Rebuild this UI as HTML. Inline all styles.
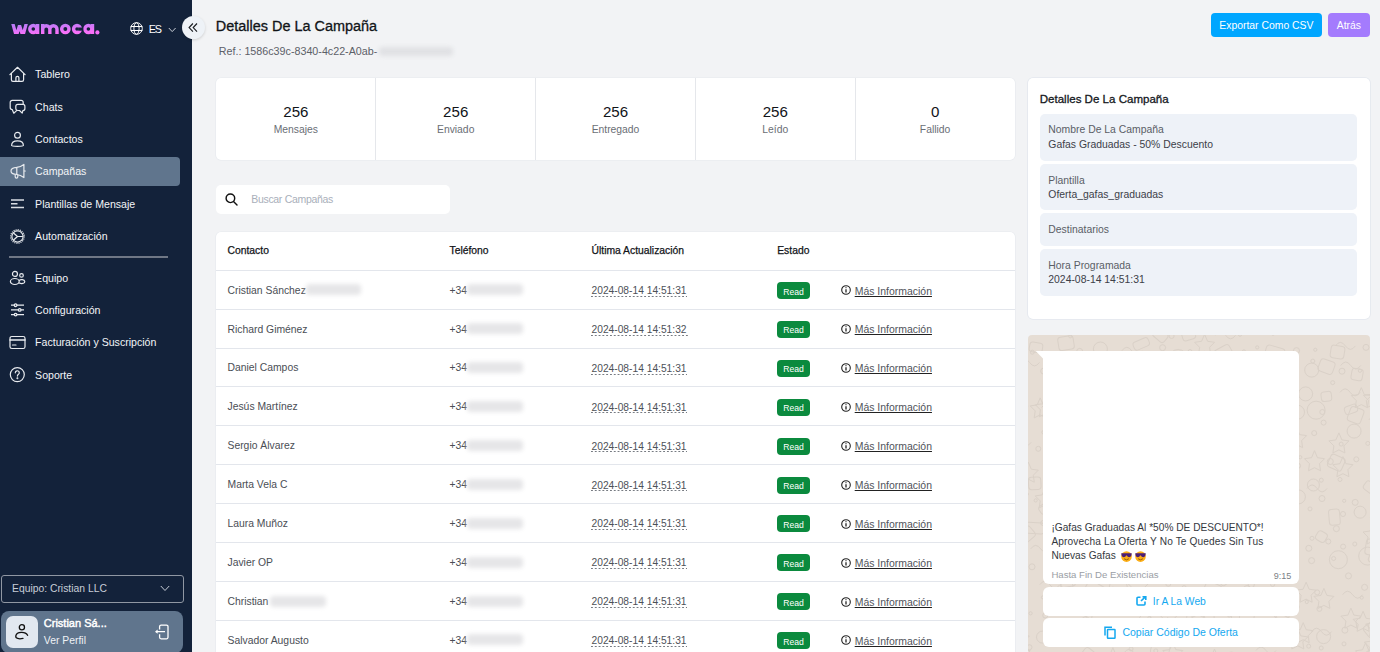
<!DOCTYPE html>
<html><head><meta charset="utf-8"><title>Detalles De La Campaña</title>
<style>
html,body{margin:0;padding:0;}
body{width:1380px;height:652px;overflow:hidden;position:relative;background:#f2f3f5;font-family:"Liberation Sans",sans-serif;}
.a{position:absolute;box-sizing:border-box;}
.t{position:absolute;white-space:nowrap;}
svg{position:absolute;overflow:visible;}
.blur{position:absolute;background:#dcdcdc;border-radius:4px;filter:blur(2px);}
</style></head><body>
<div class="a" style="left:0px;top:0px;width:192px;height:652px;background:#13223a;"></div>
<svg style="left:0;top:0" width="110" height="45" viewBox="0 0 110 45"><defs><linearGradient id="lg" gradientUnits="userSpaceOnUse" x1="10" y1="23.5" x2="10.5" y2="35"><stop offset="0" stop-color="#b07df7"/><stop offset="1" stop-color="#f870f8"/></linearGradient></defs><clipPath id="lc"><rect x="0" y="24" width="110" height="10"/></clipPath><g fill="none" stroke="url(#lg)" stroke-width="3.4"><path clip-path="url(#lc)" d="M12.4 22 L16.3 36 L19.55 25.5 L22.8 36 L26.7 22" stroke-linejoin="bevel" stroke-width="3.3"/><circle cx="33.3" cy="29" r="3.5"/><path d="M37.6 24 V34"/><path d="M42.7 24 V34 M42.7 34 V29.3 A3.575 3.575 0 0 1 49.85 29.3 V34 M49.85 29.3 A3.575 3.575 0 0 1 57 29.3 V34"/><circle cx="65.35" cy="29" r="3.65"/><circle cx="77" cy="29" r="3.45"/><circle cx="88.4" cy="29" r="3.5"/><path d="M92.5 24 V34"/></g><rect x="78.2" y="27.5" width="5" height="3.2" fill="#13223a"/><circle cx="97.4" cy="32.4" r="2.1" fill="#f56ef8"/></svg>
<svg style="left:130px;top:22px" width="13" height="13" viewBox="0 0 13 13" fill="none" stroke="#fff" stroke-width="1"><circle cx="6.5" cy="6.5" r="5.8"/><ellipse cx="6.5" cy="6.5" rx="2.6" ry="5.8"/><line x1="0.7" y1="4.5" x2="12.3" y2="4.5"/><line x1="0.7" y1="8.5" x2="12.3" y2="8.5"/></svg>
<div class="t" style="left:148.80px;top:22.61px;font-size:10.8px;line-height:13.5px;color:#fff;letter-spacing:-1.3px;">ES</div>
<svg style="left:168px;top:26.5px" width="9" height="6" viewBox="0 0 9 6" fill="none" stroke="#c9ced6" stroke-width="1"><path d="M0.8 1 L4.2 4.6 L7.6 1"/></svg>
<div class="a" style="left:182px;top:16px;width:23px;height:23px;background:#eef2f7;border-radius:50%;box-shadow:0 1px 3px rgba(0,0,0,0.15);"></div>
<svg style="left:188px;top:23px" width="11" height="10" viewBox="0 0 11 10" fill="none" stroke="#1a1d22" stroke-width="1.15"><path d="M4.9 0.5 L1.1 4.6 L4.9 8.7 M9 0.5 L5.2 4.6 L9 8.7"/></svg>
<div class="a" style="left:0px;top:157px;width:180px;height:29px;background:#60758d;border-radius:0 4px 4px 0;"></div>
<div class="t" style="left:35.10px;top:68.10px;font-size:10.6px;line-height:13.25px;color:#f3f5f8;">Tablero</div>
<div class="t" style="left:35.10px;top:100.50px;font-size:10.6px;line-height:13.25px;color:#f3f5f8;">Chats</div>
<div class="t" style="left:35.10px;top:132.90px;font-size:10.6px;line-height:13.25px;color:#f3f5f8;">Contactos</div>
<div class="t" style="left:35.10px;top:165.30px;font-size:10.6px;line-height:13.25px;color:#f3f5f8;">Campañas</div>
<div class="t" style="left:35.10px;top:197.70px;font-size:10.6px;line-height:13.25px;color:#f3f5f8;">Plantillas de Mensaje</div>
<div class="t" style="left:35.10px;top:230.10px;font-size:10.6px;line-height:13.25px;color:#f3f5f8;">Automatización</div>
<div class="t" style="left:35.10px;top:271.70px;font-size:10.6px;line-height:13.25px;color:#f3f5f8;">Equipo</div>
<div class="t" style="left:35.10px;top:304.00px;font-size:10.6px;line-height:13.25px;color:#f3f5f8;">Configuración</div>
<div class="t" style="left:35.10px;top:336.20px;font-size:10.6px;line-height:13.25px;color:#f3f5f8;">Facturación y Suscripción</div>
<div class="t" style="left:35.10px;top:368.50px;font-size:10.6px;line-height:13.25px;color:#f3f5f8;">Soporte</div>
<div class="a" style="left:8.5px;top:256px;width:159.5px;height:2px;background:#6f7785;"></div>
<svg style="left:9px;top:66px" width="17" height="17" viewBox="0 0 17 17" fill="none" stroke="#e8ebef" stroke-width="1.2" stroke-linecap="round" stroke-linejoin="round"><path d="M0.9 8.6 L8.5 1.3 L16.1 8.6 M2.4 7.3 V13.8 a1.6 1.6 0 0 0 1.6 1.6 H13 a1.6 1.6 0 0 0 1.6 -1.6 V7.3 M6.9 15.4 V11.8 a1.5 1.5 0 0 1 3 0 V15.4"/></svg>
<svg style="left:9px;top:99px" width="17" height="16" viewBox="0 0 17 16" fill="none" stroke="#e8ebef" stroke-width="1.2" stroke-linecap="round" stroke-linejoin="round"><path d="M14.2 5.3 V3.4 a2 2 0 0 0 -2 -2 H3.2 a2 2 0 0 0 -2 2 V8.5 a2 2 0 0 0 2 2 L4.8 14.2 L7.6 11.6"/><path d="M8.8 5.4 H13.9 a2 2 0 0 1 2 2 V9.5 a2 2 0 0 1 -2 2 L13.2 14.2 L10.5 11.5 H8.8 a2 2 0 0 1 -2 -2 V7.4 a2 2 0 0 1 2 -2 Z"/></svg>
<svg style="left:9px;top:131px" width="17" height="17" viewBox="0 0 17 17" fill="none" stroke="#e8ebef" stroke-width="1.2" stroke-linecap="round" stroke-linejoin="round"><circle cx="8.5" cy="4.2" r="2.9"/><path d="M2.6 14.6 C2.6 11.3, 5.3 9.8, 8.5 9.8 C11.7 9.8, 14.4 11.3, 14.4 14.6 C14.4 15.6, 2.6 15.6, 2.6 14.6 Z"/></svg>
<svg style="left:9.6px;top:163px" width="17" height="17" viewBox="0 0 17 17" fill="none" stroke="#e8ebef" stroke-width="1.2" stroke-linecap="round" stroke-linejoin="round"><path d="M6.8 4.3 C3 4.5, 1 6, 1 8 C1 10, 3 11.3, 6.8 11.5 Z M6.8 4.3 Q10.5 3.9 13.9 1.4 V14.6 Q10.5 12 6.8 11.5 M13.9 8 H15.3 M5.2 11.6 V13.8 a1.3 1.3 0 0 0 2.6 0 V11.6"/></svg>
<svg style="left:10px;top:199px" width="15" height="10" viewBox="0 0 15 10" fill="none" stroke="#d9dde3" stroke-width="1.6"><path d="M1 1 H14 M1 4.8 H7.5 M1 8.5 H14"/></svg>
<svg style="left:9px;top:227.6px" width="17" height="17" viewBox="0 0 17 17" fill="none" stroke="#e8ebef" stroke-width="1.2" stroke-linecap="round" stroke-linejoin="round"><circle cx="8.5" cy="8.5" r="6.75" stroke-dasharray="1.06 1.06" stroke-width="1.3" stroke-linecap="butt"/><circle cx="8.5" cy="8.5" r="5.6" stroke-width="1.1"/><path d="M8.5 8.5 L4.8 5.2 M8.5 8.5 L4.8 11.8 M8.5 8.5 H13.5"/></svg>
<svg style="left:9px;top:269px" width="18" height="16" viewBox="0 0 18 16" fill="none" stroke="#e8ebef" stroke-width="1.2" stroke-linecap="round" stroke-linejoin="round"><circle cx="5.95" cy="4.9" r="2.5"/><circle cx="12.5" cy="6.4" r="1.8"/><ellipse cx="5.8" cy="12.5" rx="4.4" ry="3"/><path d="M10.2 11.4 C11.5 10, 15.5 10.3, 15.8 12.6 C16 14.6, 12.5 15, 10.2 14"/></svg>
<svg style="left:10px;top:303px" width="15" height="14" viewBox="0 0 15 14" fill="none" stroke="#e8ebef" stroke-width="1.3"><path d="M1 2.2 H14 M1 6.9 H14 M1 11.6 H14"/><circle cx="5.6" cy="2.2" r="1.3" fill="#13223a"/><circle cx="9.7" cy="6.9" r="1.3" fill="#13223a"/><circle cx="5.6" cy="11.6" r="1.3" fill="#13223a"/></svg>
<svg style="left:9px;top:335px" width="17" height="15" viewBox="0 0 17 15" fill="none" stroke="#e8ebef" stroke-width="1.2" stroke-linecap="round" stroke-linejoin="round"><rect x="1" y="1.5" width="15" height="12" rx="1.8"/><path d="M1 5 H16" stroke-width="1.6"/><path d="M3.5 10 H7"/></svg>
<svg style="left:9px;top:366px" width="17" height="17" viewBox="0 0 17 17" fill="none" stroke="#e8ebef" stroke-width="1.2" stroke-linecap="round" stroke-linejoin="round"><circle cx="8.3" cy="8.6" r="7"/><path d="M6.3 6.8 a2 2 0 1 1 3 1.7 c-0.7 0.4 -0.9 0.8 -0.9 1.6"/><circle cx="8.4" cy="12.2" r="0.4" fill="#e8ebef"/></svg>
<div class="a" style="left:0.5px;top:574.5px;width:183px;height:28.5px;border:1px solid #9097a3;border-radius:3px;"></div>
<div class="t" style="left:12.00px;top:582.74px;font-size:10.35px;line-height:12.94px;color:#c8ced8;">Equipo: Cristian LLC</div>
<svg style="left:160px;top:585px" width="10" height="7" viewBox="0 0 10 7" fill="none" stroke="#c8ced8" stroke-width="1"><path d="M0.8 1 L5 5.5 L9.2 1"/></svg>
<div class="a" style="left:0.5px;top:611px;width:182.5px;height:41.5px;background:#60758d;border-radius:8px;"></div>
<div class="a" style="left:6px;top:616px;width:32px;height:32px;background:#e2e8f0;border-radius:7px;"></div>
<svg style="left:14px;top:623px" width="16" height="18" viewBox="0 0 16 18" fill="none" stroke="#111" stroke-width="1.3" stroke-linecap="round"><circle cx="7.9" cy="4.2" r="2.6"/><path d="M13.6 12.3 C11.5 8.2, 2.8 8.4, 1.8 12.8 C1.4 15.6, 5 16.3, 9 15.4"/></svg>
<div class="t" style="left:43.80px;top:616.91px;font-size:11.0px;line-height:13.75px;color:#fff;-webkit-text-stroke:0.45px #fff;">Cristian Sá...</div>
<div class="t" style="left:43.80px;top:633.60px;font-size:10.4px;line-height:13.0px;color:#eef1f5;">Ver Perfil</div>
<svg style="left:154px;top:624px" width="16" height="16" viewBox="0 0 16 16" fill="none" stroke="#fff" stroke-width="1.3" stroke-linejoin="round"><path d="M5.6 5.6 V2.6 a1.5 1.5 0 0 1 1.5 -1.5 H12.5 a1.5 1.5 0 0 1 1.5 1.5 V13.3 a1.5 1.5 0 0 1 -1.5 1.5 H7.1 a1.5 1.5 0 0 1 -1.5 -1.5 V10.2 M11 7.7 H3"/><path d="M1 7.7 L3.6 5.6 V9.8 Z" fill="#fff" stroke="none"/></svg>
<div class="t" style="left:215.80px;top:17.46px;font-size:14.45px;line-height:18.06px;color:#111418;-webkit-text-stroke:0.3px #111418;">Detalles De La Campaña</div>
<div class="t" style="left:218.80px;top:44.59px;font-size:10.72px;line-height:13.4px;color:#5c6068;">Ref.: 1586c39c-8340-4c22-A0ab-</div>
<div class="blur" style="left:379px;top:46.5px;width:74px;height:9px;background:#e0e1e4;"></div>
<div class="a" style="left:1211px;top:13px;width:111px;height:24px;background:#00a6ff;border-radius:4px;"></div>
<div class="t" style="left:1219.30px;top:19.00px;font-size:10.4px;line-height:13.0px;color:#fff;">Exportar Como CSV</div>
<div class="a" style="left:1328px;top:13px;width:42px;height:24px;background:#a47bfd;border-radius:4px;"></div>
<div class="t" style="left:1336.80px;top:19.00px;font-size:10.4px;line-height:13.0px;color:#fff;">Atrás</div>
<div class="a" style="left:216px;top:78px;width:799px;height:82px;background:#fff;border-radius:5px;box-shadow:0 0 0 0.6px #e6e9ee;"></div>
<div class="t" style="left:216.00px;width:159.8px;text-align:center;top:102.87px;font-size:15.1px;line-height:18.8px;color:#111419;">256</div>
<div class="t" style="left:216.00px;width:159.8px;text-align:center;top:123.41px;font-size:10.35px;line-height:13px;color:#6a6e75;">Mensajes</div>
<div class="a" style="left:375.3px;top:78px;width:1px;height:82px;background:#e5e7eb;"></div>
<div class="t" style="left:375.80px;width:159.8px;text-align:center;top:102.87px;font-size:15.1px;line-height:18.8px;color:#111419;">256</div>
<div class="t" style="left:375.80px;width:159.8px;text-align:center;top:123.41px;font-size:10.35px;line-height:13px;color:#6a6e75;">Enviado</div>
<div class="a" style="left:535.1px;top:78px;width:1px;height:82px;background:#e5e7eb;"></div>
<div class="t" style="left:535.60px;width:159.8px;text-align:center;top:102.87px;font-size:15.1px;line-height:18.8px;color:#111419;">256</div>
<div class="t" style="left:535.60px;width:159.8px;text-align:center;top:123.41px;font-size:10.35px;line-height:13px;color:#6a6e75;">Entregado</div>
<div class="a" style="left:694.9px;top:78px;width:1px;height:82px;background:#e5e7eb;"></div>
<div class="t" style="left:695.40px;width:159.8px;text-align:center;top:102.87px;font-size:15.1px;line-height:18.8px;color:#111419;">256</div>
<div class="t" style="left:695.40px;width:159.8px;text-align:center;top:123.41px;font-size:10.35px;line-height:13px;color:#6a6e75;">Leído</div>
<div class="a" style="left:854.7px;top:78px;width:1px;height:82px;background:#e5e7eb;"></div>
<div class="t" style="left:855.20px;width:159.8px;text-align:center;top:102.87px;font-size:15.1px;line-height:18.8px;color:#111419;">0</div>
<div class="t" style="left:855.20px;width:159.8px;text-align:center;top:123.41px;font-size:10.35px;line-height:13px;color:#6a6e75;">Fallido</div>
<div class="a" style="left:216px;top:185px;width:234px;height:29px;background:#fff;border-radius:5px;"></div>
<svg style="left:225px;top:193px" width="14" height="14" viewBox="0 0 14 14" fill="none" stroke="#111" stroke-width="1.45" stroke-linecap="round"><circle cx="5.4" cy="5.3" r="4.3"/><path d="M8.5 8.5 L12 12"/></svg>
<div class="t" style="left:251.20px;top:192.90px;font-size:10.5px;line-height:13.12px;color:#a9afba;letter-spacing:-0.3px;">Buscar Campañas</div>
<div class="a" style="left:216px;top:232px;width:799px;height:430px;background:#fff;border-radius:5px;box-shadow:0 0 0 0.6px #e6e9ee;"></div>
<div class="t" style="left:227.50px;top:244.64px;font-size:10.35px;line-height:12.94px;color:#111418;-webkit-text-stroke:0.25px #111418;">Contacto</div>
<div class="t" style="left:449.50px;top:244.64px;font-size:10.35px;line-height:12.94px;color:#111418;-webkit-text-stroke:0.25px #111418;">Teléfono</div>
<div class="t" style="left:591.50px;top:244.64px;font-size:10.35px;line-height:12.94px;color:#111418;-webkit-text-stroke:0.25px #111418;">Última Actualización</div>
<div class="t" style="left:777.20px;top:244.64px;font-size:10.35px;line-height:12.94px;color:#111418;-webkit-text-stroke:0.25px #111418;">Estado</div>
<div class="a" style="left:216px;top:270px;width:799px;height:1px;background:#e3e6ec;"></div>
<div class="t" style="left:227.50px;top:284.64px;font-size:10.36px;line-height:12.95px;color:#4a4e55;">Cristian Sánchez</div>
<div class="blur" style="left:306px;top:284.30px;width:55px;height:11px;background:#e6e6e8;"></div>
<div class="t" style="left:449.50px;top:284.64px;font-size:10.36px;line-height:12.95px;color:#4a4e55;">+34</div>
<div class="blur" style="left:467px;top:284.30px;width:56px;height:11px;background:#e6e6e8;"></div>
<div class="t" style="left:591.50px;top:285.05px;font-size:10.24px;line-height:12.8px;color:#4d5158;">2024-08-14 14:51:31</div>
<div class="a" style="left:591px;top:296px;width:96px;height:1.2px;background:linear-gradient(to right,#777b82 55%,transparent 55%);background-size:3.8px 1.2px;"></div>
<div class="a" style="left:777px;top:282.0px;width:33px;height:17px;background:#0b8a3e;border-radius:4px;"></div>
<div class="t" style="left:783.20px;top:286.55px;font-size:8.6px;line-height:10.75px;color:#fff;font-weight:500;">Read</div>
<svg style="left:841px;top:285.30px" width="10" height="10" viewBox="0 0 10 10" fill="none" stroke="#222" stroke-width="1.1"><circle cx="5" cy="5" r="4.3"/><path d="M5 4.3 V7.6" stroke-width="1.3"/><circle cx="5" cy="2.7" r="0.6" fill="#222" stroke="none"/></svg>
<div class="t" style="left:854.70px;top:284.54px;font-size:10.46px;line-height:13.08px;color:#50545b;text-decoration:underline;text-decoration-color:#222;">Más Información</div>
<div class="a" style="left:216px;top:309px;width:799px;height:1px;background:#e3e6ec;"></div>
<div class="t" style="left:227.50px;top:323.54px;font-size:10.36px;line-height:12.95px;color:#4a4e55;">Richard Giménez</div>
<div class="t" style="left:449.50px;top:323.54px;font-size:10.36px;line-height:12.95px;color:#4a4e55;">+34</div>
<div class="blur" style="left:467px;top:323.20px;width:56px;height:11px;background:#e6e6e8;"></div>
<div class="t" style="left:591.50px;top:323.95px;font-size:10.24px;line-height:12.8px;color:#4d5158;">2024-08-14 14:51:32</div>
<div class="a" style="left:591px;top:335px;width:97px;height:1.2px;background:linear-gradient(to right,#777b82 55%,transparent 55%);background-size:3.8px 1.2px;"></div>
<div class="a" style="left:777px;top:320.9px;width:33px;height:17px;background:#0b8a3e;border-radius:4px;"></div>
<div class="t" style="left:783.20px;top:325.45px;font-size:8.6px;line-height:10.75px;color:#fff;font-weight:500;">Read</div>
<svg style="left:841px;top:324.20px" width="10" height="10" viewBox="0 0 10 10" fill="none" stroke="#222" stroke-width="1.1"><circle cx="5" cy="5" r="4.3"/><path d="M5 4.3 V7.6" stroke-width="1.3"/><circle cx="5" cy="2.7" r="0.6" fill="#222" stroke="none"/></svg>
<div class="t" style="left:854.70px;top:323.44px;font-size:10.46px;line-height:13.08px;color:#50545b;text-decoration:underline;text-decoration-color:#222;">Más Información</div>
<div class="a" style="left:216px;top:348px;width:799px;height:1px;background:#e3e6ec;"></div>
<div class="t" style="left:227.50px;top:362.44px;font-size:10.36px;line-height:12.95px;color:#4a4e55;">Daniel Campos</div>
<div class="t" style="left:449.50px;top:362.44px;font-size:10.36px;line-height:12.95px;color:#4a4e55;">+34</div>
<div class="blur" style="left:467px;top:362.10px;width:56px;height:11px;background:#e6e6e8;"></div>
<div class="t" style="left:591.50px;top:362.85px;font-size:10.24px;line-height:12.8px;color:#4d5158;">2024-08-14 14:51:31</div>
<div class="a" style="left:591px;top:374px;width:96px;height:1.2px;background:linear-gradient(to right,#777b82 55%,transparent 55%);background-size:3.8px 1.2px;"></div>
<div class="a" style="left:777px;top:359.8px;width:33px;height:17px;background:#0b8a3e;border-radius:4px;"></div>
<div class="t" style="left:783.20px;top:364.35px;font-size:8.6px;line-height:10.75px;color:#fff;font-weight:500;">Read</div>
<svg style="left:841px;top:363.10px" width="10" height="10" viewBox="0 0 10 10" fill="none" stroke="#222" stroke-width="1.1"><circle cx="5" cy="5" r="4.3"/><path d="M5 4.3 V7.6" stroke-width="1.3"/><circle cx="5" cy="2.7" r="0.6" fill="#222" stroke="none"/></svg>
<div class="t" style="left:854.70px;top:362.34px;font-size:10.46px;line-height:13.08px;color:#50545b;text-decoration:underline;text-decoration-color:#222;">Más Información</div>
<div class="a" style="left:216px;top:386px;width:799px;height:1px;background:#e3e6ec;"></div>
<div class="t" style="left:227.50px;top:401.34px;font-size:10.36px;line-height:12.95px;color:#4a4e55;">Jesús Martínez</div>
<div class="t" style="left:449.50px;top:401.34px;font-size:10.36px;line-height:12.95px;color:#4a4e55;">+34</div>
<div class="blur" style="left:467px;top:401.00px;width:56px;height:11px;background:#e6e6e8;"></div>
<div class="t" style="left:591.50px;top:401.75px;font-size:10.24px;line-height:12.8px;color:#4d5158;">2024-08-14 14:51:31</div>
<div class="a" style="left:591px;top:412px;width:96px;height:1.2px;background:linear-gradient(to right,#777b82 55%,transparent 55%);background-size:3.8px 1.2px;"></div>
<div class="a" style="left:777px;top:398.7px;width:33px;height:17px;background:#0b8a3e;border-radius:4px;"></div>
<div class="t" style="left:783.20px;top:403.25px;font-size:8.6px;line-height:10.75px;color:#fff;font-weight:500;">Read</div>
<svg style="left:841px;top:402.00px" width="10" height="10" viewBox="0 0 10 10" fill="none" stroke="#222" stroke-width="1.1"><circle cx="5" cy="5" r="4.3"/><path d="M5 4.3 V7.6" stroke-width="1.3"/><circle cx="5" cy="2.7" r="0.6" fill="#222" stroke="none"/></svg>
<div class="t" style="left:854.70px;top:401.24px;font-size:10.46px;line-height:13.08px;color:#50545b;text-decoration:underline;text-decoration-color:#222;">Más Información</div>
<div class="a" style="left:216px;top:425px;width:799px;height:1px;background:#e3e6ec;"></div>
<div class="t" style="left:227.50px;top:440.24px;font-size:10.36px;line-height:12.95px;color:#4a4e55;">Sergio Álvarez</div>
<div class="t" style="left:449.50px;top:440.24px;font-size:10.36px;line-height:12.95px;color:#4a4e55;">+34</div>
<div class="blur" style="left:467px;top:439.90px;width:56px;height:11px;background:#e6e6e8;"></div>
<div class="t" style="left:591.50px;top:440.65px;font-size:10.24px;line-height:12.8px;color:#4d5158;">2024-08-14 14:51:31</div>
<div class="a" style="left:591px;top:451px;width:96px;height:1.2px;background:linear-gradient(to right,#777b82 55%,transparent 55%);background-size:3.8px 1.2px;"></div>
<div class="a" style="left:777px;top:437.6px;width:33px;height:17px;background:#0b8a3e;border-radius:4px;"></div>
<div class="t" style="left:783.20px;top:442.15px;font-size:8.6px;line-height:10.75px;color:#fff;font-weight:500;">Read</div>
<svg style="left:841px;top:440.90px" width="10" height="10" viewBox="0 0 10 10" fill="none" stroke="#222" stroke-width="1.1"><circle cx="5" cy="5" r="4.3"/><path d="M5 4.3 V7.6" stroke-width="1.3"/><circle cx="5" cy="2.7" r="0.6" fill="#222" stroke="none"/></svg>
<div class="t" style="left:854.70px;top:440.14px;font-size:10.46px;line-height:13.08px;color:#50545b;text-decoration:underline;text-decoration-color:#222;">Más Información</div>
<div class="a" style="left:216px;top:464px;width:799px;height:1px;background:#e3e6ec;"></div>
<div class="t" style="left:227.50px;top:479.14px;font-size:10.36px;line-height:12.95px;color:#4a4e55;">Marta Vela C</div>
<div class="t" style="left:449.50px;top:479.14px;font-size:10.36px;line-height:12.95px;color:#4a4e55;">+34</div>
<div class="blur" style="left:467px;top:478.80px;width:56px;height:11px;background:#e6e6e8;"></div>
<div class="t" style="left:591.50px;top:479.55px;font-size:10.24px;line-height:12.8px;color:#4d5158;">2024-08-14 14:51:31</div>
<div class="a" style="left:591px;top:490px;width:96px;height:1.2px;background:linear-gradient(to right,#777b82 55%,transparent 55%);background-size:3.8px 1.2px;"></div>
<div class="a" style="left:777px;top:476.5px;width:33px;height:17px;background:#0b8a3e;border-radius:4px;"></div>
<div class="t" style="left:783.20px;top:481.05px;font-size:8.6px;line-height:10.75px;color:#fff;font-weight:500;">Read</div>
<svg style="left:841px;top:479.80px" width="10" height="10" viewBox="0 0 10 10" fill="none" stroke="#222" stroke-width="1.1"><circle cx="5" cy="5" r="4.3"/><path d="M5 4.3 V7.6" stroke-width="1.3"/><circle cx="5" cy="2.7" r="0.6" fill="#222" stroke="none"/></svg>
<div class="t" style="left:854.70px;top:479.04px;font-size:10.46px;line-height:13.08px;color:#50545b;text-decoration:underline;text-decoration-color:#222;">Más Información</div>
<div class="a" style="left:216px;top:503px;width:799px;height:1px;background:#e3e6ec;"></div>
<div class="t" style="left:227.50px;top:518.04px;font-size:10.36px;line-height:12.95px;color:#4a4e55;">Laura Muñoz</div>
<div class="t" style="left:449.50px;top:518.04px;font-size:10.36px;line-height:12.95px;color:#4a4e55;">+34</div>
<div class="blur" style="left:467px;top:517.70px;width:56px;height:11px;background:#e6e6e8;"></div>
<div class="t" style="left:591.50px;top:518.45px;font-size:10.24px;line-height:12.8px;color:#4d5158;">2024-08-14 14:51:31</div>
<div class="a" style="left:591px;top:529px;width:96px;height:1.2px;background:linear-gradient(to right,#777b82 55%,transparent 55%);background-size:3.8px 1.2px;"></div>
<div class="a" style="left:777px;top:515.4px;width:33px;height:17px;background:#0b8a3e;border-radius:4px;"></div>
<div class="t" style="left:783.20px;top:519.95px;font-size:8.6px;line-height:10.75px;color:#fff;font-weight:500;">Read</div>
<svg style="left:841px;top:518.70px" width="10" height="10" viewBox="0 0 10 10" fill="none" stroke="#222" stroke-width="1.1"><circle cx="5" cy="5" r="4.3"/><path d="M5 4.3 V7.6" stroke-width="1.3"/><circle cx="5" cy="2.7" r="0.6" fill="#222" stroke="none"/></svg>
<div class="t" style="left:854.70px;top:517.94px;font-size:10.46px;line-height:13.08px;color:#50545b;text-decoration:underline;text-decoration-color:#222;">Más Información</div>
<div class="a" style="left:216px;top:542px;width:799px;height:1px;background:#e3e6ec;"></div>
<div class="t" style="left:227.50px;top:556.94px;font-size:10.36px;line-height:12.95px;color:#4a4e55;">Javier OP</div>
<div class="t" style="left:449.50px;top:556.94px;font-size:10.36px;line-height:12.95px;color:#4a4e55;">+34</div>
<div class="blur" style="left:467px;top:556.60px;width:56px;height:11px;background:#e6e6e8;"></div>
<div class="t" style="left:591.50px;top:557.35px;font-size:10.24px;line-height:12.8px;color:#4d5158;">2024-08-14 14:51:31</div>
<div class="a" style="left:591px;top:568px;width:96px;height:1.2px;background:linear-gradient(to right,#777b82 55%,transparent 55%);background-size:3.8px 1.2px;"></div>
<div class="a" style="left:777px;top:554.3px;width:33px;height:17px;background:#0b8a3e;border-radius:4px;"></div>
<div class="t" style="left:783.20px;top:558.85px;font-size:8.6px;line-height:10.75px;color:#fff;font-weight:500;">Read</div>
<svg style="left:841px;top:557.60px" width="10" height="10" viewBox="0 0 10 10" fill="none" stroke="#222" stroke-width="1.1"><circle cx="5" cy="5" r="4.3"/><path d="M5 4.3 V7.6" stroke-width="1.3"/><circle cx="5" cy="2.7" r="0.6" fill="#222" stroke="none"/></svg>
<div class="t" style="left:854.70px;top:556.84px;font-size:10.46px;line-height:13.08px;color:#50545b;text-decoration:underline;text-decoration-color:#222;">Más Información</div>
<div class="a" style="left:216px;top:581px;width:799px;height:1px;background:#e3e6ec;"></div>
<div class="t" style="left:227.50px;top:595.84px;font-size:10.36px;line-height:12.95px;color:#4a4e55;">Christian</div>
<div class="blur" style="left:270px;top:595.50px;width:56px;height:11px;background:#e6e6e8;"></div>
<div class="t" style="left:449.50px;top:595.84px;font-size:10.36px;line-height:12.95px;color:#4a4e55;">+34</div>
<div class="blur" style="left:467px;top:595.50px;width:56px;height:11px;background:#e6e6e8;"></div>
<div class="t" style="left:591.50px;top:596.25px;font-size:10.24px;line-height:12.8px;color:#4d5158;">2024-08-14 14:51:31</div>
<div class="a" style="left:591px;top:607px;width:96px;height:1.2px;background:linear-gradient(to right,#777b82 55%,transparent 55%);background-size:3.8px 1.2px;"></div>
<div class="a" style="left:777px;top:593.2px;width:33px;height:17px;background:#0b8a3e;border-radius:4px;"></div>
<div class="t" style="left:783.20px;top:597.75px;font-size:8.6px;line-height:10.75px;color:#fff;font-weight:500;">Read</div>
<svg style="left:841px;top:596.50px" width="10" height="10" viewBox="0 0 10 10" fill="none" stroke="#222" stroke-width="1.1"><circle cx="5" cy="5" r="4.3"/><path d="M5 4.3 V7.6" stroke-width="1.3"/><circle cx="5" cy="2.7" r="0.6" fill="#222" stroke="none"/></svg>
<div class="t" style="left:854.70px;top:595.74px;font-size:10.46px;line-height:13.08px;color:#50545b;text-decoration:underline;text-decoration-color:#222;">Más Información</div>
<div class="a" style="left:216px;top:620px;width:799px;height:1px;background:#e3e6ec;"></div>
<div class="t" style="left:227.50px;top:634.74px;font-size:10.36px;line-height:12.95px;color:#4a4e55;">Salvador Augusto</div>
<div class="t" style="left:449.50px;top:634.74px;font-size:10.36px;line-height:12.95px;color:#4a4e55;">+34</div>
<div class="blur" style="left:467px;top:634.40px;width:56px;height:11px;background:#e6e6e8;"></div>
<div class="t" style="left:591.50px;top:635.15px;font-size:10.24px;line-height:12.8px;color:#4d5158;">2024-08-14 14:51:31</div>
<div class="a" style="left:591px;top:646px;width:96px;height:1.2px;background:linear-gradient(to right,#777b82 55%,transparent 55%);background-size:3.8px 1.2px;"></div>
<div class="a" style="left:777px;top:632.1px;width:33px;height:17px;background:#0b8a3e;border-radius:4px;"></div>
<div class="t" style="left:783.20px;top:636.65px;font-size:8.6px;line-height:10.75px;color:#fff;font-weight:500;">Read</div>
<svg style="left:841px;top:635.40px" width="10" height="10" viewBox="0 0 10 10" fill="none" stroke="#222" stroke-width="1.1"><circle cx="5" cy="5" r="4.3"/><path d="M5 4.3 V7.6" stroke-width="1.3"/><circle cx="5" cy="2.7" r="0.6" fill="#222" stroke="none"/></svg>
<div class="t" style="left:854.70px;top:634.64px;font-size:10.46px;line-height:13.08px;color:#50545b;text-decoration:underline;text-decoration-color:#222;">Más Información</div>
<div class="a" style="left:1028px;top:78px;width:341.5px;height:241px;background:#fff;border-radius:5px;box-shadow:0 0 0 0.8px #e3e7ee;"></div>
<div class="t" style="left:1039.70px;top:91.98px;font-size:11.55px;line-height:14.44px;color:#15181d;-webkit-text-stroke:0.3px #15181d;">Detalles De La Campaña</div>
<div class="a" style="left:1040px;top:113.5px;width:317px;height:47px;background:#eef2f8;border-radius:5px;"></div>
<div class="t" style="left:1048.30px;top:123.40px;font-size:10.4px;line-height:13.0px;color:#5a5e66;">Nombre De La Campaña</div>
<div class="t" style="left:1048.30px;top:137.90px;font-size:10.4px;line-height:13.0px;color:#3c4048;">Gafas Graduadas - 50% Descuento</div>
<div class="a" style="left:1040px;top:163.8px;width:317px;height:46.5px;background:#eef2f8;border-radius:5px;"></div>
<div class="t" style="left:1048.30px;top:173.70px;font-size:10.4px;line-height:13.0px;color:#5a5e66;">Plantilla</div>
<div class="t" style="left:1048.30px;top:188.20px;font-size:10.4px;line-height:13.0px;color:#3c4048;">Oferta_gafas_graduadas</div>
<div class="a" style="left:1040px;top:213.4px;width:317px;height:32.2px;background:#eef2f8;border-radius:5px;"></div>
<div class="t" style="left:1048.30px;top:223.40px;font-size:10.4px;line-height:13.0px;color:#5a5e66;">Destinatarios</div>
<div class="a" style="left:1040px;top:249px;width:317px;height:46.6px;background:#eef2f8;border-radius:5px;"></div>
<div class="t" style="left:1048.30px;top:258.90px;font-size:10.4px;line-height:13.0px;color:#5a5e66;">Hora Programada</div>
<div class="t" style="left:1048.30px;top:273.40px;font-size:10.4px;line-height:13.0px;color:#3c4048;">2024-08-14 14:51:31</div>
<div class="a" style="left:1028px;top:335px;width:341.5px;height:330px;background:#e6ddd4;border-radius:4px;overflow:hidden;"><svg style="left:0;top:0" width="342" height="330" viewBox="0 0 342 330" fill="none" stroke="#dad1c8" stroke-width="1"><path d="M-9.3 -7.5 q 5 -7 10 0 t 10 0"/><circle cx="7.9" cy="-8.4" r="6"/><circle cx="30.7" cy="-8.9" r="6"/><circle cx="35.6" cy="-11.8" r="1.6"/><circle cx="61.1" cy="-10.3" r="2"/><circle cx="78.6" cy="-2.9" r="1.6"/><circle cx="88.2" cy="-12.9" r="3"/><circle cx="107.5" cy="-7.0" r="2"/><rect x="129.9" y="-8.5" width="14.6" height="10.2" rx="3" transform="rotate(40 129.9 -8.5)"/><rect x="152.9" y="-2.7" width="13.2" height="9.8" rx="3" transform="rotate(-17 152.9 -2.7)"/><circle cx="154.2" cy="-4.0" r="2.5"/><path d="M176.6 -0.7 l3 7 l7 1 l-5 5 l1 7 l-6 -3 l-6 3 l1 -7 l-5 -5 l7 -1 z"/><path d="M187.0 -13.4 q 5 -7 10 0 t 10 0"/><circle cx="212.0" cy="-0.3" r="1.6"/><rect x="230.6" y="-13.6" width="13.4" height="10.5" rx="3" transform="rotate(-39 230.6 -13.6)"/><circle cx="245.0" cy="-1.3" r="1.6"/><circle cx="255.2" cy="-9.1" r="2"/><rect x="279.6" y="-13.8" width="11.3" height="13.1" rx="3" transform="rotate(-31 279.6 -13.8)"/><circle cx="296.2" cy="-13.4" r="2.5"/><circle cx="323.0" cy="-16.7" r="1.6"/><circle cx="323.7" cy="-14.5" r="1.6"/><circle cx="353.1" cy="-11.4" r="1.6"/><rect x="358.3" y="-13.5" width="10.2" height="10.9" rx="3" transform="rotate(10 358.3 -13.5)"/><path d="M-14.8 10.0 l3 7 l7 1 l-5 5 l1 7 l-6 -3 l-6 3 l1 -7 l-5 -5 l7 -1 z"/><rect x="2.3" y="6.6" width="13.1" height="9.8" rx="3" transform="rotate(9 2.3 6.6)"/><rect x="29.3" y="2.7" width="15.5" height="13.5" rx="3" transform="rotate(-9 29.3 2.7)"/><circle cx="42.2" cy="1.3" r="1.6"/><circle cx="51.7" cy="16.4" r="3"/><circle cx="72.4" cy="14.0" r="7"/><path d="M93.8 15.8 q 5 -7 10 0 t 10 0"/><rect x="104.1" y="8.1" width="16.2" height="8.6" rx="3" transform="rotate(-23 104.1 8.1)"/><circle cx="134.6" cy="12.7" r="3"/><circle cx="143.6" cy="1.0" r="2.5"/><circle cx="162.0" cy="16.5" r="2"/><rect x="185.1" y="16.7" width="16.9" height="12.7" rx="3" transform="rotate(-29 185.1 16.7)"/><path d="M187.6 0.3 q 5 -7 10 0 t 10 0"/><circle cx="215.9" cy="16.4" r="1.6"/><circle cx="229.2" cy="12.4" r="1.6"/><rect x="239.3" y="9.3" width="19.0" height="13.9" rx="3" transform="rotate(16 239.3 9.3)"/><circle cx="268.5" cy="15.6" r="3"/><circle cx="287.3" cy="14.8" r="1.6"/><rect x="303.7" y="9.7" width="13.8" height="12.7" rx="3" transform="rotate(9 303.7 9.7)"/><path d="M307.4 10.9 q 5 -7 10 0 t 10 0"/><circle cx="338.0" cy="12.4" r="3"/><circle cx="347.5" cy="14.3" r="1.6"/><circle cx="362.3" cy="1.5" r="1.6"/><path d="M-8.5 27.4 q 5 -7 10 0 t 10 0"/><circle cx="4.3" cy="17.2" r="2"/><circle cx="25.8" cy="29.8" r="3"/><circle cx="42.5" cy="21.1" r="2.5"/><path d="M54.4 24.3 l3 7 l7 1 l-5 5 l1 7 l-6 -3 l-6 3 l1 -7 l-5 -5 l7 -1 z"/><circle cx="83.5" cy="32.0" r="2.5"/><circle cx="88.6" cy="19.3" r="1.6"/><circle cx="114.1" cy="33.2" r="2"/><path d="M120.9 25.0 q 5 -7 10 0 t 10 0"/><circle cx="150.1" cy="23.5" r="9"/><path d="M158.4 31.3 q 5 -7 10 0 t 10 0"/><circle cx="177.7" cy="18.3" r="1.6"/><circle cx="198.5" cy="21.8" r="1.6"/><circle cx="214.9" cy="23.9" r="2.5"/><circle cx="225.0" cy="19.4" r="1.6"/><rect x="245.6" y="27.7" width="18.1" height="15.7" rx="3" transform="rotate(15 245.6 27.7)"/><circle cx="258.4" cy="25.1" r="1.6"/><circle cx="284.8" cy="26.1" r="2"/><rect x="293.6" y="22.9" width="15.2" height="12.9" rx="3" transform="rotate(20 293.6 22.9)"/><path d="M312.7 30.5 q 5 -7 10 0 t 10 0"/><rect x="324.5" y="32.9" width="11.3" height="11.6" rx="3" transform="rotate(10 324.5 32.9)"/><circle cx="355.5" cy="23.4" r="9"/><circle cx="370.5" cy="33.1" r="2"/><path d="M-15.3 48.7 l3 7 l7 1 l-5 5 l1 7 l-6 -3 l-6 3 l1 -7 l-5 -5 l7 -1 z"/><circle cx="15.7" cy="36.1" r="3"/><circle cx="33.7" cy="50.6" r="7"/><circle cx="38.5" cy="46.2" r="1.6"/><circle cx="51.6" cy="39.8" r="2.5"/><path d="M76.3 34.5 l3 7 l7 1 l-5 5 l1 7 l-6 -3 l-6 3 l1 -7 l-5 -5 l7 -1 z"/><circle cx="86.1" cy="47.6" r="2.5"/><circle cx="113.7" cy="49.6" r="3"/><path d="M135.1 42.4 q 5 -7 10 0 t 10 0"/><circle cx="137.5" cy="37.8" r="7"/><circle cx="167.1" cy="43.5" r="2.5"/><path d="M175.3 40.5 l3 7 l7 1 l-5 5 l1 7 l-6 -3 l-6 3 l1 -7 l-5 -5 l7 -1 z"/><path d="M202.3 37.5 l3 7 l7 1 l-5 5 l1 7 l-6 -3 l-6 3 l1 -7 l-5 -5 l7 -1 z"/><circle cx="220.5" cy="42.9" r="6"/><circle cx="228.0" cy="35.9" r="3"/><circle cx="238.5" cy="50.5" r="7"/><circle cx="264.2" cy="50.8" r="1.6"/><circle cx="283.7" cy="35.1" r="7"/><circle cx="304.7" cy="47.6" r="2"/><circle cx="314.0" cy="36.2" r="3"/><circle cx="331.9" cy="35.8" r="1.6"/><rect x="355.7" y="36.2" width="10.2" height="9.6" rx="3" transform="rotate(-22 355.7 36.2)"/><circle cx="368.7" cy="39.5" r="3"/><circle cx="-15.2" cy="63.4" r="2.5"/><path d="M12.2 62.9 l3 7 l7 1 l-5 5 l1 7 l-6 -3 l-6 3 l1 -7 l-5 -5 l7 -1 z"/><path d="M17.4 61.8 l3 7 l7 1 l-5 5 l1 7 l-6 -3 l-6 3 l1 -7 l-5 -5 l7 -1 z"/><path d="M44.5 60.1 l3 7 l7 1 l-5 5 l1 7 l-6 -3 l-6 3 l1 -7 l-5 -5 l7 -1 z"/><circle cx="60.1" cy="54.7" r="2"/><path d="M72.0 63.6 l3 7 l7 1 l-5 5 l1 7 l-6 -3 l-6 3 l1 -7 l-5 -5 l7 -1 z"/><circle cx="100.3" cy="56.4" r="2"/><path d="M105.7 68.0 l3 7 l7 1 l-5 5 l1 7 l-6 -3 l-6 3 l1 -7 l-5 -5 l7 -1 z"/><rect x="121.3" y="55.1" width="12.6" height="8.8" rx="3" transform="rotate(27 121.3 55.1)"/><circle cx="143.2" cy="64.4" r="3"/><circle cx="163.7" cy="64.6" r="2.5"/><circle cx="185.5" cy="67.5" r="2.5"/><circle cx="195.5" cy="62.7" r="1.6"/><rect x="212.2" y="51.4" width="16.1" height="15.2" rx="3" transform="rotate(-1 212.2 51.4)"/><circle cx="224.2" cy="53.0" r="2"/><circle cx="254.8" cy="66.8" r="1.6"/><circle cx="257.3" cy="62.6" r="1.6"/><circle cx="277.6" cy="58.9" r="7"/><rect x="292.6" y="57.3" width="10.4" height="9.6" rx="3" transform="rotate(-7 292.6 57.3)"/><path d="M312.1 57.3 q 5 -7 10 0 t 10 0"/><path d="M333.3 52.6 l3 7 l7 1 l-5 5 l1 7 l-6 -3 l-6 3 l1 -7 l-5 -5 l7 -1 z"/><path d="M345.5 52.4 l3 7 l7 1 l-5 5 l1 7 l-6 -3 l-6 3 l1 -7 l-5 -5 l7 -1 z"/><path d="M371.9 66.4 q 5 -7 10 0 t 10 0"/><circle cx="-7.3" cy="71.2" r="7"/><path d="M13.7 72.4 q 5 -7 10 0 t 10 0"/><path d="M29.7 81.2 l3 7 l7 1 l-5 5 l1 7 l-6 -3 l-6 3 l1 -7 l-5 -5 l7 -1 z"/><path d="M40.9 83.2 l3 7 l7 1 l-5 5 l1 7 l-6 -3 l-6 3 l1 -7 l-5 -5 l7 -1 z"/><rect x="62.8" y="81.0" width="14.1" height="13.8" rx="3" transform="rotate(-34 62.8 81.0)"/><circle cx="73.8" cy="76.0" r="2.5"/><circle cx="101.8" cy="83.3" r="2.5"/><circle cx="118.1" cy="79.3" r="3"/><circle cx="128.7" cy="77.1" r="3"/><rect x="146.9" y="79.9" width="19.8" height="8.2" rx="3" transform="rotate(9 146.9 79.9)"/><circle cx="165.6" cy="72.4" r="1.6"/><circle cx="182.9" cy="79.0" r="2.5"/><circle cx="191.3" cy="83.4" r="9"/><path d="M211.1 76.9 l3 7 l7 1 l-5 5 l1 7 l-6 -3 l-6 3 l1 -7 l-5 -5 l7 -1 z"/><rect x="222.7" y="75.6" width="15.5" height="13.3" rx="3" transform="rotate(36 222.7 75.6)"/><circle cx="244.6" cy="84.0" r="2"/><circle cx="269.5" cy="77.2" r="7"/><circle cx="288.1" cy="75.2" r="9"/><circle cx="294.3" cy="77.0" r="2.5"/><rect x="315.5" y="72.8" width="13.0" height="8.1" rx="3" transform="rotate(-20 315.5 72.8)"/><rect x="323.7" y="70.7" width="13.9" height="15.2" rx="3" transform="rotate(20 323.7 70.7)"/><path d="M340.9 84.8 q 5 -7 10 0 t 10 0"/><circle cx="358.2" cy="83.4" r="3"/><circle cx="-12.7" cy="97.8" r="1.6"/><circle cx="15.9" cy="97.3" r="2"/><rect x="27.3" y="87.0" width="14.6" height="9.6" rx="3" transform="rotate(-36 27.3 87.0)"/><circle cx="43.0" cy="87.1" r="3"/><circle cx="58.7" cy="89.5" r="7"/><path d="M74.2 97.6 l3 7 l7 1 l-5 5 l1 7 l-6 -3 l-6 3 l1 -7 l-5 -5 l7 -1 z"/><circle cx="87.3" cy="89.9" r="3"/><path d="M103.9 100.2 l3 7 l7 1 l-5 5 l1 7 l-6 -3 l-6 3 l1 -7 l-5 -5 l7 -1 z"/><circle cx="129.6" cy="91.1" r="2"/><circle cx="146.8" cy="97.8" r="2"/><circle cx="161.5" cy="96.1" r="1.6"/><circle cx="180.7" cy="85.2" r="1.6"/><circle cx="197.6" cy="86.7" r="6"/><circle cx="216.8" cy="100.5" r="2"/><circle cx="231.7" cy="91.3" r="2"/><circle cx="243.8" cy="93.4" r="1.6"/><path d="M268.6 92.6 l3 7 l7 1 l-5 5 l1 7 l-6 -3 l-6 3 l1 -7 l-5 -5 l7 -1 z"/><circle cx="286.2" cy="98.1" r="2.5"/><circle cx="295.6" cy="87.6" r="2.5"/><path d="M310.9 97.9 l3 7 l7 1 l-5 5 l1 7 l-6 -3 l-6 3 l1 -7 l-5 -5 l7 -1 z"/><circle cx="326.1" cy="96.1" r="7"/><circle cx="354.9" cy="86.3" r="3"/><path d="M370.9 92.9 l3 7 l7 1 l-5 5 l1 7 l-6 -3 l-6 3 l1 -7 l-5 -5 l7 -1 z"/><path d="M-16.8 107.3 q 5 -7 10 0 t 10 0"/><circle cx="10.3" cy="113.8" r="2.5"/><circle cx="21.8" cy="104.4" r="2.5"/><rect x="40.2" y="104.0" width="15.7" height="15.3" rx="3" transform="rotate(35 40.2 104.0)"/><path d="M66.5 109.4 l3 7 l7 1 l-5 5 l1 7 l-6 -3 l-6 3 l1 -7 l-5 -5 l7 -1 z"/><circle cx="73.2" cy="107.4" r="2"/><circle cx="86.4" cy="116.1" r="3"/><rect x="111.9" y="115.5" width="13.7" height="11.1" rx="3" transform="rotate(-28 111.9 115.5)"/><circle cx="129.0" cy="105.0" r="3"/><circle cx="151.0" cy="106.8" r="1.6"/><path d="M162.3 111.6 q 5 -7 10 0 t 10 0"/><circle cx="181.1" cy="115.7" r="2.5"/><circle cx="200.4" cy="103.4" r="1.6"/><rect x="219.3" y="103.4" width="11.4" height="14.0" rx="3" transform="rotate(12 219.3 103.4)"/><rect x="225.2" y="105.7" width="15.2" height="14.1" rx="3" transform="rotate(-8 225.2 105.7)"/><rect x="243.7" y="118.5" width="14.9" height="12.3" rx="3" transform="rotate(18 243.7 118.5)"/><circle cx="267.0" cy="117.6" r="2.5"/><path d="M286.5 115.7 l3 7 l7 1 l-5 5 l1 7 l-6 -3 l-6 3 l1 -7 l-5 -5 l7 -1 z"/><rect x="304.1" y="118.3" width="15.2" height="13.7" rx="3" transform="rotate(24 304.1 118.3)"/><circle cx="313.2" cy="109.1" r="2"/><circle cx="339.8" cy="108.4" r="2"/><circle cx="346.6" cy="111.0" r="1.6"/><circle cx="365.0" cy="114.4" r="2"/><circle cx="-3.8" cy="122.1" r="3"/><path d="M0.3 127.2 l3 7 l7 1 l-5 5 l1 7 l-6 -3 l-6 3 l1 -7 l-5 -5 l7 -1 z"/><circle cx="22.3" cy="122.4" r="2"/><circle cx="44.2" cy="127.0" r="7"/><circle cx="54.1" cy="123.8" r="2.5"/><circle cx="78.7" cy="135.0" r="7"/><path d="M93.2 125.8 q 5 -7 10 0 t 10 0"/><circle cx="113.2" cy="132.1" r="2"/><circle cx="125.8" cy="122.7" r="3"/><rect x="152.6" y="132.5" width="17.9" height="8.5" rx="3" transform="rotate(34 152.6 132.5)"/><path d="M168.2 133.9 q 5 -7 10 0 t 10 0"/><circle cx="177.7" cy="123.2" r="2"/><circle cx="194.1" cy="132.1" r="2"/><circle cx="214.8" cy="135.9" r="1.6"/><circle cx="223.6" cy="132.1" r="2"/><circle cx="252.0" cy="120.4" r="1.6"/><circle cx="270.1" cy="130.8" r="2.5"/><circle cx="272.3" cy="122.2" r="1.6"/><circle cx="302.3" cy="126.5" r="3"/><path d="M314.9 121.7 l3 7 l7 1 l-5 5 l1 7 l-6 -3 l-6 3 l1 -7 l-5 -5 l7 -1 z"/><circle cx="328.3" cy="124.3" r="2.5"/><circle cx="357.0" cy="130.3" r="1.6"/><circle cx="368.7" cy="120.8" r="3"/><circle cx="-4.3" cy="149.3" r="3"/><rect x="0.2" y="142.4" width="12.4" height="12.5" rx="3" transform="rotate(-3 0.2 142.4)"/><path d="M17.2 152.9 l3 7 l7 1 l-5 5 l1 7 l-6 -3 l-6 3 l1 -7 l-5 -5 l7 -1 z"/><circle cx="37.5" cy="146.5" r="3"/><path d="M66.9 148.7 q 5 -7 10 0 t 10 0"/><circle cx="80.8" cy="145.4" r="2"/><circle cx="88.4" cy="148.4" r="2.5"/><circle cx="111.6" cy="148.3" r="3"/><circle cx="120.6" cy="138.4" r="2"/><path d="M139.1 142.8 l3 7 l7 1 l-5 5 l1 7 l-6 -3 l-6 3 l1 -7 l-5 -5 l7 -1 z"/><circle cx="163.1" cy="137.5" r="2"/><rect x="186.8" y="143.4" width="13.4" height="14.6" rx="3" transform="rotate(34 186.8 143.4)"/><circle cx="189.4" cy="139.5" r="3"/><rect x="212.2" y="151.7" width="17.3" height="12.9" rx="3" transform="rotate(-15 212.2 151.7)"/><path d="M234.4 140.2 q 5 -7 10 0 t 10 0"/><circle cx="247.0" cy="140.4" r="2.5"/><circle cx="266.1" cy="137.8" r="2.5"/><circle cx="285.4" cy="150.0" r="6"/><circle cx="293.3" cy="145.2" r="2"/><circle cx="312.0" cy="144.5" r="2"/><rect x="339.8" y="144.8" width="18.4" height="9.6" rx="3" transform="rotate(36 339.8 144.8)"/><circle cx="350.7" cy="139.4" r="2"/><circle cx="365.1" cy="143.1" r="1.6"/><circle cx="-1.2" cy="159.1" r="1.6"/><circle cx="7.7" cy="165.4" r="1.6"/><path d="M26.5 157.5 q 5 -7 10 0 t 10 0"/><circle cx="50.9" cy="166.9" r="6"/><rect x="66.9" y="153.1" width="13.6" height="14.1" rx="3" transform="rotate(-11 66.9 153.1)"/><path d="M70.8 163.2 l3 7 l7 1 l-5 5 l1 7 l-6 -3 l-6 3 l1 -7 l-5 -5 l7 -1 z"/><path d="M92.7 159.9 l3 7 l7 1 l-5 5 l1 7 l-6 -3 l-6 3 l1 -7 l-5 -5 l7 -1 z"/><circle cx="117.8" cy="170.0" r="3"/><rect x="129.5" y="163.9" width="11.6" height="11.3" rx="3" transform="rotate(-37 129.5 163.9)"/><circle cx="145.0" cy="155.0" r="2.5"/><circle cx="161.8" cy="157.5" r="7"/><rect x="170.9" y="166.3" width="17.9" height="11.2" rx="3" transform="rotate(-0 170.9 166.3)"/><path d="M188.7 158.9 l3 7 l7 1 l-5 5 l1 7 l-6 -3 l-6 3 l1 -7 l-5 -5 l7 -1 z"/><circle cx="219.5" cy="162.6" r="2.5"/><path d="M229.3 169.9 l3 7 l7 1 l-5 5 l1 7 l-6 -3 l-6 3 l1 -7 l-5 -5 l7 -1 z"/><circle cx="252.5" cy="160.0" r="1.6"/><circle cx="270.4" cy="161.9" r="7"/><path d="M279.1 153.4 q 5 -7 10 0 t 10 0"/><circle cx="294.0" cy="163.5" r="3"/><circle cx="316.2" cy="165.8" r="1.6"/><circle cx="327.2" cy="167.4" r="3"/><circle cx="356.5" cy="161.1" r="2"/><path d="M366.3 164.2 q 5 -7 10 0 t 10 0"/><rect x="-2.0" y="187.0" width="18.7" height="11.0" rx="3" transform="rotate(4 -2.0 187.0)"/><rect x="9.6" y="172.8" width="14.2" height="9.0" rx="3" transform="rotate(-34 9.6 172.8)"/><path d="M25.8 172.2 l3 7 l7 1 l-5 5 l1 7 l-6 -3 l-6 3 l1 -7 l-5 -5 l7 -1 z"/><circle cx="43.8" cy="177.7" r="2.5"/><circle cx="51.4" cy="172.9" r="3"/><circle cx="81.9" cy="176.8" r="2"/><path d="M85.8 170.5 l3 7 l7 1 l-5 5 l1 7 l-6 -3 l-6 3 l1 -7 l-5 -5 l7 -1 z"/><path d="M107.2 178.5 q 5 -7 10 0 t 10 0"/><circle cx="135.6" cy="178.0" r="2.5"/><circle cx="150.6" cy="181.8" r="2.5"/><circle cx="167.2" cy="176.0" r="2"/><circle cx="180.8" cy="181.9" r="9"/><path d="M197.8 173.3 l3 7 l7 1 l-5 5 l1 7 l-6 -3 l-6 3 l1 -7 l-5 -5 l7 -1 z"/><rect x="204.9" y="171.8" width="13.1" height="15.2" rx="3" transform="rotate(30 204.9 171.8)"/><rect x="233.1" y="172.3" width="19.4" height="11.6" rx="3" transform="rotate(-34 233.1 172.3)"/><rect x="241.8" y="175.2" width="12.0" height="9.4" rx="3" transform="rotate(-21 241.8 175.2)"/><circle cx="266.3" cy="183.4" r="1.6"/><circle cx="282.0" cy="173.9" r="2"/><rect x="300.3" y="174.7" width="10.9" height="15.9" rx="3" transform="rotate(-5 300.3 174.7)"/><circle cx="315.0" cy="179.0" r="2.5"/><circle cx="332.1" cy="177.2" r="6"/><circle cx="344.8" cy="182.8" r="2.5"/><path d="M369.5 170.5 l3 7 l7 1 l-5 5 l1 7 l-6 -3 l-6 3 l1 -7 l-5 -5 l7 -1 z"/><rect x="-14.4" y="202.3" width="19.2" height="12.7" rx="3" transform="rotate(-40 -14.4 202.3)"/><circle cx="15.2" cy="188.0" r="2.5"/><circle cx="22.5" cy="195.2" r="2.5"/><rect x="42.6" y="201.4" width="15.2" height="15.6" rx="3" transform="rotate(-26 42.6 201.4)"/><circle cx="64.3" cy="189.8" r="6"/><circle cx="79.4" cy="196.3" r="2"/><path d="M89.4 196.3 l3 7 l7 1 l-5 5 l1 7 l-6 -3 l-6 3 l1 -7 l-5 -5 l7 -1 z"/><circle cx="112.3" cy="191.4" r="1.6"/><circle cx="128.7" cy="201.8" r="2"/><path d="M146.3 197.3 l3 7 l7 1 l-5 5 l1 7 l-6 -3 l-6 3 l1 -7 l-5 -5 l7 -1 z"/><path d="M161.6 199.3 l3 7 l7 1 l-5 5 l1 7 l-6 -3 l-6 3 l1 -7 l-5 -5 l7 -1 z"/><circle cx="170.5" cy="188.9" r="2"/><circle cx="197.6" cy="187.9" r="2.5"/><path d="M217.9 199.6 l3 7 l7 1 l-5 5 l1 7 l-6 -3 l-6 3 l1 -7 l-5 -5 l7 -1 z"/><rect x="234.0" y="195.5" width="15.1" height="11.0" rx="3" transform="rotate(-20 234.0 195.5)"/><circle cx="246.4" cy="198.2" r="7"/><circle cx="256.0" cy="194.0" r="2"/><circle cx="284.0" cy="203.3" r="2"/><rect x="291.5" y="194.7" width="10.4" height="9.9" rx="3" transform="rotate(31 291.5 194.7)"/><circle cx="308.4" cy="193.7" r="3"/><rect x="338.9" y="203.5" width="17.2" height="15.8" rx="3" transform="rotate(9 338.9 203.5)"/><path d="M345.0 189.0 l3 7 l7 1 l-5 5 l1 7 l-6 -3 l-6 3 l1 -7 l-5 -5 l7 -1 z"/><circle cx="364.1" cy="188.5" r="2.5"/><circle cx="-11.3" cy="220.7" r="6"/><path d="M2.7 213.9 q 5 -7 10 0 t 10 0"/><path d="M29.5 213.6 q 5 -7 10 0 t 10 0"/><circle cx="49.0" cy="219.7" r="3"/><circle cx="66.9" cy="207.6" r="1.6"/><circle cx="71.7" cy="209.9" r="2"/><circle cx="93.2" cy="210.8" r="7"/><rect x="110.0" y="212.3" width="11.8" height="11.9" rx="3" transform="rotate(3 110.0 212.3)"/><circle cx="126.1" cy="204.8" r="2.5"/><rect x="146.6" y="212.8" width="15.1" height="12.5" rx="3" transform="rotate(12 146.6 212.8)"/><circle cx="156.7" cy="205.8" r="2.5"/><path d="M172.3 208.1 l3 7 l7 1 l-5 5 l1 7 l-6 -3 l-6 3 l1 -7 l-5 -5 l7 -1 z"/><path d="M189.0 221.0 l3 7 l7 1 l-5 5 l1 7 l-6 -3 l-6 3 l1 -7 l-5 -5 l7 -1 z"/><circle cx="211.6" cy="218.5" r="2.5"/><circle cx="234.1" cy="212.8" r="3"/><circle cx="248.3" cy="212.3" r="2"/><circle cx="255.5" cy="209.3" r="2"/><circle cx="280.8" cy="213.3" r="3"/><circle cx="300.3" cy="206.5" r="2.5"/><circle cx="315.1" cy="211.6" r="2.5"/><circle cx="326.8" cy="209.0" r="2"/><rect x="342.4" y="218.4" width="14.8" height="8.1" rx="3" transform="rotate(21 342.4 218.4)"/><circle cx="369.6" cy="215.2" r="2"/><circle cx="-7.5" cy="227.0" r="2.5"/><circle cx="4.0" cy="231.8" r="3"/><circle cx="19.0" cy="229.4" r="2.5"/><circle cx="38.8" cy="233.0" r="3"/><circle cx="54.4" cy="234.1" r="2"/><path d="M76.8 233.6 q 5 -7 10 0 t 10 0"/><circle cx="98.7" cy="229.1" r="2.5"/><circle cx="113.9" cy="221.4" r="2.5"/><circle cx="134.5" cy="236.5" r="3"/><circle cx="144.4" cy="231.0" r="2.5"/><circle cx="168.1" cy="222.2" r="2.5"/><circle cx="185.2" cy="230.6" r="2"/><circle cx="197.9" cy="227.5" r="2.5"/><circle cx="204.5" cy="233.0" r="1.6"/><circle cx="231.7" cy="231.6" r="3"/><circle cx="239.1" cy="222.2" r="3"/><circle cx="261.5" cy="236.5" r="2"/><circle cx="283.6" cy="225.6" r="3"/><circle cx="305.6" cy="223.5" r="2"/><circle cx="310.4" cy="224.7" r="9"/><circle cx="339.7" cy="221.1" r="9"/><path d="M353.0 222.3 l3 7 l7 1 l-5 5 l1 7 l-6 -3 l-6 3 l1 -7 l-5 -5 l7 -1 z"/><path d="M372.0 232.7 l3 7 l7 1 l-5 5 l1 7 l-6 -3 l-6 3 l1 -7 l-5 -5 l7 -1 z"/><circle cx="-12.5" cy="239.8" r="2"/><path d="M11.8 249.7 q 5 -7 10 0 t 10 0"/><rect x="31.0" y="240.7" width="14.9" height="12.5" rx="3" transform="rotate(-10 31.0 240.7)"/><circle cx="38.9" cy="250.7" r="6"/><rect x="62.0" y="244.2" width="19.2" height="13.9" rx="3" transform="rotate(30 62.0 244.2)"/><path d="M84.8 251.9 l3 7 l7 1 l-5 5 l1 7 l-6 -3 l-6 3 l1 -7 l-5 -5 l7 -1 z"/><circle cx="90.3" cy="252.4" r="9"/><path d="M110.2 240.8 l3 7 l7 1 l-5 5 l1 7 l-6 -3 l-6 3 l1 -7 l-5 -5 l7 -1 z"/><circle cx="133.8" cy="238.9" r="3"/><circle cx="140.3" cy="248.8" r="2.5"/><circle cx="156.1" cy="252.6" r="2"/><rect x="179.6" y="245.2" width="16.2" height="14.6" rx="3" transform="rotate(24 179.6 245.2)"/><rect x="189.1" y="244.4" width="12.3" height="9.5" rx="3" transform="rotate(-39 189.1 244.4)"/><path d="M214.0 254.0 q 5 -7 10 0 t 10 0"/><circle cx="223.3" cy="249.7" r="3"/><circle cx="244.6" cy="249.5" r="2"/><circle cx="267.1" cy="240.0" r="2.5"/><path d="M278.1 247.2 l3 7 l7 1 l-5 5 l1 7 l-6 -3 l-6 3 l1 -7 l-5 -5 l7 -1 z"/><path d="M295.9 253.4 l3 7 l7 1 l-5 5 l1 7 l-6 -3 l-6 3 l1 -7 l-5 -5 l7 -1 z"/><circle cx="320.5" cy="240.9" r="3"/><circle cx="336.6" cy="252.3" r="3"/><circle cx="352.3" cy="244.9" r="3"/><circle cx="368.5" cy="241.7" r="2"/><circle cx="-9.5" cy="269.2" r="7"/><circle cx="15.0" cy="262.4" r="1.6"/><circle cx="21.6" cy="264.7" r="3"/><circle cx="38.7" cy="258.9" r="2.5"/><circle cx="60.4" cy="264.5" r="1.6"/><circle cx="83.2" cy="260.3" r="2"/><path d="M90.7 257.4 l3 7 l7 1 l-5 5 l1 7 l-6 -3 l-6 3 l1 -7 l-5 -5 l7 -1 z"/><circle cx="118.9" cy="261.9" r="2.5"/><circle cx="132.7" cy="261.7" r="2.5"/><path d="M140.7 271.0 l3 7 l7 1 l-5 5 l1 7 l-6 -3 l-6 3 l1 -7 l-5 -5 l7 -1 z"/><path d="M169.9 262.5 l3 7 l7 1 l-5 5 l1 7 l-6 -3 l-6 3 l1 -7 l-5 -5 l7 -1 z"/><circle cx="182.3" cy="258.0" r="2"/><circle cx="196.2" cy="266.5" r="1.6"/><circle cx="216.8" cy="260.3" r="6"/><circle cx="236.1" cy="256.1" r="2.5"/><rect x="251.8" y="268.5" width="14.0" height="14.4" rx="3" transform="rotate(26 251.8 268.5)"/><circle cx="268.1" cy="271.8" r="3"/><circle cx="278.8" cy="267.0" r="1.6"/><circle cx="289.2" cy="257.4" r="2.5"/><path d="M314.6 259.7 q 5 -7 10 0 t 10 0"/><circle cx="333.7" cy="262.6" r="1.6"/><circle cx="355.4" cy="260.5" r="2.5"/><circle cx="360.6" cy="258.1" r="2"/><circle cx="-7.7" cy="283.6" r="1.6"/><circle cx="2.6" cy="278.3" r="1.6"/><circle cx="17.2" cy="280.5" r="2.5"/><rect x="50.2" y="286.3" width="10.2" height="9.4" rx="3" transform="rotate(-35 50.2 286.3)"/><circle cx="61.0" cy="281.8" r="3"/><circle cx="84.4" cy="275.7" r="2"/><circle cx="98.8" cy="273.2" r="2.5"/><circle cx="117.0" cy="285.2" r="6"/><circle cx="121.5" cy="282.8" r="1.6"/><path d="M139.6 282.5 l3 7 l7 1 l-5 5 l1 7 l-6 -3 l-6 3 l1 -7 l-5 -5 l7 -1 z"/><circle cx="167.6" cy="282.7" r="9"/><rect x="185.7" y="274.1" width="17.4" height="11.5" rx="3" transform="rotate(-3 185.7 274.1)"/><circle cx="201.2" cy="280.5" r="1.6"/><rect x="212.8" y="272.5" width="14.5" height="12.7" rx="3" transform="rotate(8 212.8 272.5)"/><circle cx="236.8" cy="274.6" r="2.5"/><rect x="250.5" y="277.3" width="19.9" height="11.2" rx="3" transform="rotate(29 250.5 277.3)"/><circle cx="257.2" cy="288.8" r="2"/><path d="M275.2 287.7 l3 7 l7 1 l-5 5 l1 7 l-6 -3 l-6 3 l1 -7 l-5 -5 l7 -1 z"/><circle cx="291.4" cy="273.9" r="2.5"/><path d="M322.9 273.1 l3 7 l7 1 l-5 5 l1 7 l-6 -3 l-6 3 l1 -7 l-5 -5 l7 -1 z"/><path d="M335.1 276.3 l3 7 l7 1 l-5 5 l1 7 l-6 -3 l-6 3 l1 -7 l-5 -5 l7 -1 z"/><path d="M347.7 281.1 l3 7 l7 1 l-5 5 l1 7 l-6 -3 l-6 3 l1 -7 l-5 -5 l7 -1 z"/><rect x="360.3" y="276.8" width="10.7" height="12.4" rx="3" transform="rotate(23 360.3 276.8)"/><path d="M-8.7 293.1 l3 7 l7 1 l-5 5 l1 7 l-6 -3 l-6 3 l1 -7 l-5 -5 l7 -1 z"/><circle cx="14.5" cy="302.1" r="6"/><circle cx="30.5" cy="291.6" r="1.6"/><path d="M39.7 304.8 q 5 -7 10 0 t 10 0"/><circle cx="54.7" cy="293.9" r="3"/><circle cx="68.5" cy="300.6" r="3"/><circle cx="86.2" cy="305.8" r="2.5"/><circle cx="116.9" cy="301.4" r="3"/><rect x="125.4" y="302.9" width="18.4" height="15.6" rx="3" transform="rotate(13 125.4 302.9)"/><rect x="139.5" y="292.6" width="11.7" height="12.6" rx="3" transform="rotate(-37 139.5 292.6)"/><circle cx="157.7" cy="293.4" r="2.5"/><circle cx="175.2" cy="289.1" r="2"/><circle cx="199.5" cy="295.1" r="3"/><circle cx="207.4" cy="290.2" r="2.5"/><circle cx="234.9" cy="296.0" r="1.6"/><rect x="254.0" y="294.9" width="12.4" height="12.6" rx="3" transform="rotate(-17 254.0 294.9)"/><path d="M269.8 293.9 l3 7 l7 1 l-5 5 l1 7 l-6 -3 l-6 3 l1 -7 l-5 -5 l7 -1 z"/><path d="M283.5 296.7 q 5 -7 10 0 t 10 0"/><circle cx="295.6" cy="301.6" r="7"/><circle cx="316.9" cy="295.2" r="3"/><rect x="334.2" y="293.5" width="10.1" height="12.9" rx="3" transform="rotate(-39 334.2 293.5)"/><path d="M346.4 299.1 l3 7 l7 1 l-5 5 l1 7 l-6 -3 l-6 3 l1 -7 l-5 -5 l7 -1 z"/><circle cx="363.6" cy="293.7" r="1.6"/><path d="M-7.7 307.7 l3 7 l7 1 l-5 5 l1 7 l-6 -3 l-6 3 l1 -7 l-5 -5 l7 -1 z"/><circle cx="1.5" cy="312.2" r="2.5"/><path d="M33.8 319.9 l3 7 l7 1 l-5 5 l1 7 l-6 -3 l-6 3 l1 -7 l-5 -5 l7 -1 z"/><circle cx="45.4" cy="308.6" r="2"/><rect x="58.9" y="311.4" width="16.1" height="15.8" rx="3" transform="rotate(38 58.9 311.4)"/><path d="M84.9 312.7 l3 7 l7 1 l-5 5 l1 7 l-6 -3 l-6 3 l1 -7 l-5 -5 l7 -1 z"/><path d="M96.0 317.9 q 5 -7 10 0 t 10 0"/><circle cx="103.1" cy="313.9" r="2"/><circle cx="127.8" cy="315.9" r="2"/><path d="M144.8 307.6 l3 7 l7 1 l-5 5 l1 7 l-6 -3 l-6 3 l1 -7 l-5 -5 l7 -1 z"/><rect x="153.1" y="322.3" width="17.9" height="15.2" rx="3" transform="rotate(13 153.1 322.3)"/><path d="M186.5 314.1 l3 7 l7 1 l-5 5 l1 7 l-6 -3 l-6 3 l1 -7 l-5 -5 l7 -1 z"/><circle cx="194.4" cy="308.6" r="2.5"/><circle cx="220.1" cy="321.2" r="2.5"/><path d="M228.0 315.5 q 5 -7 10 0 t 10 0"/><path d="M251.2 307.6 q 5 -7 10 0 t 10 0"/><circle cx="264.6" cy="307.2" r="1.6"/><circle cx="280.7" cy="311.2" r="2"/><circle cx="293.2" cy="313.0" r="2"/><circle cx="316.0" cy="308.9" r="2"/><path d="M337.5 307.8 l3 7 l7 1 l-5 5 l1 7 l-6 -3 l-6 3 l1 -7 l-5 -5 l7 -1 z"/><circle cx="342.6" cy="322.5" r="7"/><rect x="367.5" y="322.4" width="11.2" height="14.6" rx="3" transform="rotate(-22 367.5 322.4)"/><rect x="-3.4" y="324.9" width="13.8" height="10.4" rx="3" transform="rotate(9 -3.4 324.9)"/><path d="M6.9 331.4 q 5 -7 10 0 t 10 0"/><rect x="26.2" y="336.0" width="13.9" height="10.4" rx="3" transform="rotate(-23 26.2 336.0)"/><circle cx="43.1" cy="334.2" r="3"/><circle cx="54.5" cy="339.9" r="6"/><path d="M77.7 331.5 q 5 -7 10 0 t 10 0"/><rect x="91.7" y="328.1" width="12.6" height="10.9" rx="3" transform="rotate(-6 91.7 328.1)"/><circle cx="110.1" cy="329.1" r="3"/><circle cx="121.0" cy="328.3" r="6"/><circle cx="145.0" cy="332.3" r="2"/><circle cx="164.5" cy="335.1" r="2.5"/><rect x="178.2" y="326.9" width="14.9" height="8.1" rx="3" transform="rotate(-7 178.2 326.9)"/><circle cx="203.4" cy="323.1" r="6"/><circle cx="210.2" cy="333.2" r="2.5"/><circle cx="224.6" cy="336.0" r="2"/><rect x="246.5" y="331.8" width="10.5" height="8.7" rx="3" transform="rotate(-20 246.5 331.8)"/><circle cx="259.6" cy="336.5" r="2.5"/><rect x="278.8" y="327.9" width="10.9" height="15.9" rx="3" transform="rotate(27 278.8 327.9)"/><path d="M294.6 328.4 l3 7 l7 1 l-5 5 l1 7 l-6 -3 l-6 3 l1 -7 l-5 -5 l7 -1 z"/><circle cx="319.4" cy="333.9" r="3"/><circle cx="323.8" cy="333.6" r="7"/><path d="M350.9 323.4 q 5 -7 10 0 t 10 0"/><circle cx="369.8" cy="332.9" r="3"/><path d="M-9.9 351.6 q 5 -7 10 0 t 10 0"/><path d="M15.6 341.3 l3 7 l7 1 l-5 5 l1 7 l-6 -3 l-6 3 l1 -7 l-5 -5 l7 -1 z"/><circle cx="24.5" cy="352.8" r="3"/><circle cx="45.5" cy="353.6" r="1.6"/><circle cx="65.2" cy="356.3" r="1.6"/><rect x="80.0" y="346.8" width="16.5" height="8.9" rx="3" transform="rotate(29 80.0 346.8)"/><circle cx="86.6" cy="345.5" r="1.6"/><circle cx="104.6" cy="344.7" r="3"/><rect x="134.8" y="343.4" width="14.9" height="11.5" rx="3" transform="rotate(24 134.8 343.4)"/><circle cx="144.7" cy="348.2" r="6"/><circle cx="166.1" cy="345.5" r="2"/><path d="M181.1 346.4 l3 7 l7 1 l-5 5 l1 7 l-6 -3 l-6 3 l1 -7 l-5 -5 l7 -1 z"/><circle cx="198.6" cy="347.7" r="7"/><circle cx="210.1" cy="349.9" r="3"/><circle cx="226.6" cy="351.9" r="2.5"/><circle cx="244.0" cy="347.0" r="1.6"/><circle cx="268.6" cy="344.3" r="2"/><circle cx="279.4" cy="350.5" r="7"/><circle cx="304.5" cy="347.7" r="2"/><rect x="309.2" y="350.5" width="15.0" height="9.2" rx="3" transform="rotate(39 309.2 350.5)"/><circle cx="329.0" cy="342.7" r="3"/><rect x="342.6" y="356.2" width="18.1" height="8.8" rx="3" transform="rotate(23 342.6 356.2)"/><circle cx="360.7" cy="343.4" r="9"/></svg></div>
<svg style="left:1035px;top:351px" width="8" height="8" viewBox="0 0 8 8"><path d="M0.7 0 H8 V7.5 Z" fill="#fff"/></svg>
<div class="a" style="left:1042.7px;top:351px;width:256px;height:233px;background:#fff;border-radius:0 5px 6px 6px;"></div>
<div class="t" style="left:1051.40px;top:521.74px;font-size:10.15px;line-height:12.69px;color:#34383e;letter-spacing:0.02px;">¡Gafas Graduadas Al *50% DE DESCUENTO*!</div>
<div class="t" style="left:1051.40px;top:536.09px;font-size:10.15px;line-height:12.69px;color:#34383e;letter-spacing:0.13px;">Aprovecha La Oferta Y No Te Quedes Sin Tus</div>
<div class="t" style="left:1051.40px;top:550.44px;font-size:10.15px;line-height:12.69px;color:#34383e;letter-spacing:0.02px;">Nuevas Gafas </div>
<svg style="left:1121px;top:550.8px" width="11" height="11" viewBox="0 0 11 11"><circle cx="5.5" cy="5.6" r="5.3" fill="#fbae17"/><path d="M0.2 2.3 H10.8 L10.4 4.6 Q9.8 6.2 8.2 6.2 Q6.4 6.2 5.9 4.4 H5.1 Q4.6 6.2 2.8 6.2 Q1.2 6.2 0.6 4.6 Z" fill="#4b1f78"/><path d="M3.4 8 Q5.5 9.9 7.6 8" stroke="#8a5210" stroke-width="0.9" fill="none" stroke-linecap="round"/></svg><svg style="left:1135.2px;top:550.8px" width="11" height="11" viewBox="0 0 11 11"><circle cx="5.5" cy="5.6" r="5.3" fill="#fbae17"/><path d="M0.2 2.3 H10.8 L10.4 4.6 Q9.8 6.2 8.2 6.2 Q6.4 6.2 5.9 4.4 H5.1 Q4.6 6.2 2.8 6.2 Q1.2 6.2 0.6 4.6 Z" fill="#4b1f78"/><path d="M3.4 8 Q5.5 9.9 7.6 8" stroke="#8a5210" stroke-width="0.9" fill="none" stroke-linecap="round"/></svg><div class="t" style="left:1051.40px;top:568.57px;font-size:9.6px;line-height:12.0px;color:#9a9ea5;">Hasta Fin De Existencias</div>
<div class="t" style="left:1273.80px;top:570.86px;font-size:9.0px;line-height:11.25px;color:#7b7f86;">9:15</div>
<div class="a" style="left:1042.7px;top:586.7px;width:256px;height:29px;background:#fff;border-radius:6px;"></div>
<svg style="left:1136px;top:596px" width="11" height="10" viewBox="0 0 11 10" fill="none" stroke="#14a8f0" stroke-width="1.6"><path d="M4.5 1.2 H2 a1 1 0 0 0 -1 1 V8 a1 1 0 0 0 1 1 H8 a1 1 0 0 0 1 -1 V5.5 M5 5 L9.6 0.6 M6.5 0.8 H9.8 V4"/></svg>
<div class="t" style="left:1152.80px;top:595.79px;font-size:10.3px;line-height:12.88px;color:#14a8f0;">Ir A La Web</div>
<div class="a" style="left:1042.7px;top:618.2px;width:256px;height:28.5px;background:#fff;border-radius:6px;"></div>
<svg style="left:1104px;top:626px" width="12" height="13" viewBox="0 0 12 13" fill="none" stroke="#14a8f0" stroke-width="1.5"><path d="M1 9.5 V1.2 H8"/><rect x="3.5" y="3.5" width="7.5" height="8.7" rx="0.5"/></svg>
<div class="t" style="left:1122.40px;top:626.10px;font-size:10.5px;line-height:13.12px;color:#14a8f0;">Copiar Código De Oferta</div>
</body></html>
